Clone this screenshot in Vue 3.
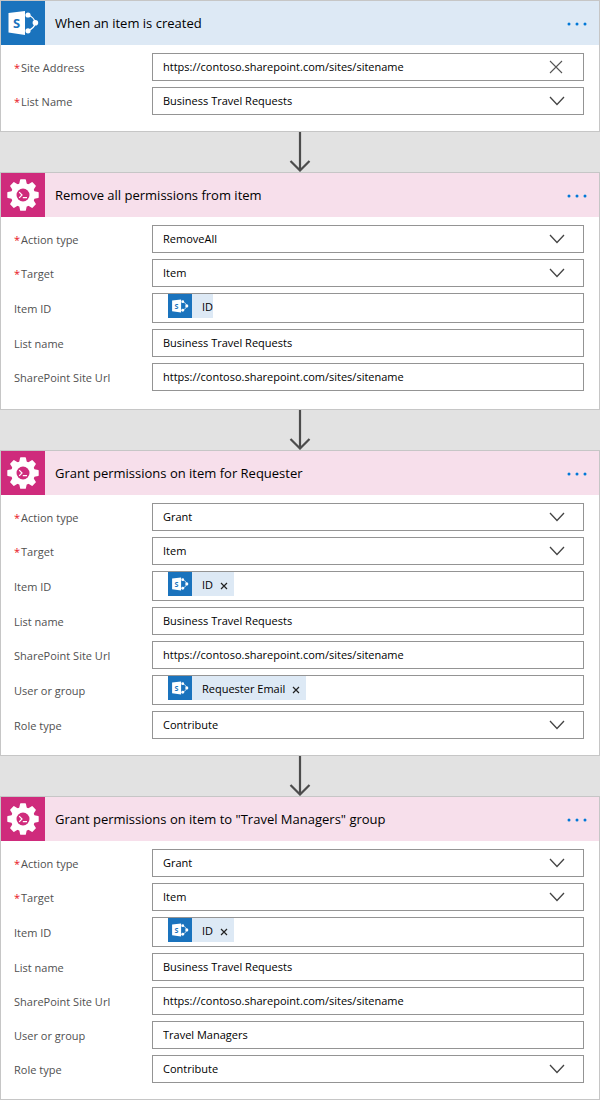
<script setup>
import { h } from 'vue'

const SharePointIcon = () =>
  h('svg', { viewBox: '0 0 44 44', 'aria-hidden': 'true' }, [
    h('path', {
      d: 'M27 14Q33 16 34.500 22Q33 27.500 27 29.800',
      fill: 'none',
      stroke: '#fff',
      'stroke-width': 1.2,
    }),
    h('circle', { cx: 27, cy: 14, r: 2.6, fill: '#fff' }),
    h('circle', { cx: 34.4, cy: 21.8, r: 2.8, fill: '#fff' }),
    h('circle', { cx: 27, cy: 29.8, r: 2.6, fill: '#fff' }),
    h('path', { d: 'M7.500 12 24 10v24L7.500 31.500z', fill: '#fff' }),
    h(
      'text',
      {
        x: 15.5,
        y: 27,
        'text-anchor': 'middle',
        'font-family': 'Open Sans, sans-serif',
        'font-size': 13,
        'font-weight': 700,
        fill: '#1a73bd',
      },
      'S',
    ),
  ])

const site = 'https://contoso.sharepoint.com/sites/sitename'
const list = 'Business Travel Requests'

const text = (label, value) => ({ label, value, kind: 'text' })
const select = (label, value, required = false) => ({ label, value, required, kind: 'select' })
const token = (label, value, removable = true) => ({ label, value, removable, kind: 'token' })

const cards = [
  {
    title: 'When an item is created',
    theme: 'trigger',
    fields: [
      { label: 'Site Address', value: site, required: true, kind: 'clearable' },
      select('List Name', list, true),
    ],
  },
  {
    title: 'Remove all permissions from item',
    theme: 'action',
    roomy: true,
    fields: [
      select('Action type', 'RemoveAll', true),
      select('Target', 'Item', true),
      token('Item ID', 'ID', false),
      text('List name', list),
      text('SharePoint Site Url', site),
    ],
  },
  {
    title: 'Grant permissions on item for Requester',
    theme: 'action',
    fields: [
      select('Action type', 'Grant', true),
      select('Target', 'Item', true),
      token('Item ID', 'ID'),
      text('List name', list),
      text('SharePoint Site Url', site),
      token('User or group', 'Requester Email'),
      select('Role type', 'Contribute'),
    ],
  },
  {
    title: 'Grant permissions on item to "Travel Managers" group',
    theme: 'action',
    fields: [
      select('Action type', 'Grant', true),
      select('Target', 'Item', true),
      token('Item ID', 'ID'),
      text('List name', list),
      text('SharePoint Site Url', site),
      text('User or group', 'Travel Managers'),
      select('Role type', 'Contribute'),
    ],
  },
]
</script>

<template>
  <main class="flow">
    <template v-for="(card, c) in cards" :key="c">
      <svg v-if="c" class="arrow" viewBox="0 0 30 40" aria-hidden="true">
        <path d="M15 0V38M5.500 29 15 38.500 24.500 29" fill="none" stroke="#4c4c4c" stroke-width="2.200" />
      </svg>
      <section class="card" :class="[card.theme, { roomy: card.roomy }]">
        <header class="head">
          <span class="tile">
            <SharePointIcon v-if="card.theme === 'trigger'" />
            <svg v-else viewBox="-22 -22 44 44" aria-hidden="true">
              <g fill="#fff">
                <circle r="12" />
                <path
                  v-for="n in 8"
                  :key="n"
                  d="M-4-10-2.900-15.200Q-2.800-15.700-2.200-15.700H2.200Q2.800-15.700 2.900-15.200L4-10z"
                  :transform="`rotate(${n * 45})`"
                />
              </g>
              <circle r="6.500" fill="#cf2b7c" />
              <path d="M-3.800-2.800-1 0-3.800 2.800M-.2 2.600H4" fill="none" stroke="#fff" stroke-width="1.200" />
            </svg>
          </span>
          <h2>{{ card.title }}</h2>
          <button class="more" type="button">
            <svg viewBox="0 0 20 4" aria-hidden="true">
              <g fill="#0078d7"><circle cx="2" cy="2" r="1.500" /><circle cx="10" cy="2" r="1.500" /><circle cx="18" cy="2" r="1.500" /></g>
            </svg>
          </button>
        </header>
        <div class="fields">
          <div v-for="(f, i) in card.fields" :key="i" class="row">
            <label :id="`l${c}-${i}`" :for="f.kind === 'token' ? null : `f${c}-${i}`"><span v-if="f.required" class="star">*</span>{{ f.label }}</label>

            <div v-if="f.kind === 'token'" class="box tokens" role="group" :aria-labelledby="`l${c}-${i}`">
              <span class="token">
                <span class="token-tile"><SharePointIcon /></span>
                <span class="token-text">{{ f.value }}</span>
                <button v-if="f.removable" class="remove" type="button">
                  <svg viewBox="0 0 8 8" aria-hidden="true"><path d="M1 1 7 7M7 1 1 7" fill="none" stroke="#222" stroke-width="1.200" /></svg>
                </button>
              </span>
            </div>

            <div v-else-if="f.kind === 'select'" class="box">
              <select :id="`f${c}-${i}`"><option>{{ f.value }}</option></select>
              <svg class="chevron" viewBox="0 0 16 10" aria-hidden="true">
                <path d="M1 1 8 8.500 15 1" fill="none" stroke="#444" stroke-width="1.300" />
              </svg>
            </div>

            <div v-else class="box">
              <input :id="`f${c}-${i}`" type="text" :value="f.value" />
              <button v-if="f.kind === 'clearable'" class="clear" type="button">
                <svg viewBox="0 0 14 14" aria-hidden="true"><path d="M1 1 13 13M13 1 1 13" fill="none" stroke="#555" stroke-width="1.100" /></svg>
              </button>
            </div>
          </div>
        </div>
      </section>
    </template>
  </main>
</template>

<style>
body {
  margin: 0;
  background: #e2e2e2;
}
</style>

<style scoped>
.flow {
  display: flex;
  flex-direction: column;
  font-family: 'Open Sans', 'Noto Sans', sans-serif;
  font-size: 11px;
  line-height: 16px;
  color: #000;
}
.arrow {
  align-self: center;
  width: 30px;
  height: 40px;
}
.card {
  border: 1px solid #c6c6c6;
  background: #fff;
}
.head {
  display: flex;
  align-items: center;
  height: 44px;
}
.trigger .head {
  background: #dde9f5;
}
.action .head {
  background: #f7dfeb;
}
.tile {
  width: 44px;
  height: 44px;
  background: #cf2b7c;
}
.trigger .tile {
  background: #1a73bd;
}
.tile svg {
  display: block;
  width: 44px;
  height: 44px;
}
h2 {
  flex: 1;
  margin: 0;
  padding-left: 10px;
  font-size: 13px;
  font-weight: 400;
  line-height: 20px;
}
button {
  display: flex;
  align-items: center;
  justify-content: center;
  padding: 0;
  border: 0;
  background: none;
  cursor: pointer;
}
.more {
  width: 44px;
  height: 44px;
  padding-top: 2px;
}
.more svg {
  width: 20px;
  height: 4px;
}
.fields {
  display: flex;
  flex-direction: column;
  gap: 6px;
  padding: 8px 15px 16px 13px;
}
.roomy .fields {
  padding-bottom: 18px;
}
.row {
  display: flex;
  align-items: center;
}
label {
  width: 138px;
  padding-top: 2px;
  color: #505050;
}
.star {
  margin-right: 1px;
  color: #e81123;
}
.box {
  box-sizing: border-box;
  display: flex;
  align-items: center;
  flex: 1;
  height: 28px;
  border: 1px solid #949494;
  background: #fff;
  position: relative;
}
.tokens {
  height: 30px;
  align-items: flex-start;
  padding-left: 15px;
}
input,
select {
  box-sizing: border-box;
  appearance: none;
  flex: 1;
  min-width: 0;
  height: 100%;
  margin: 0;
  padding: 0 10px;
  border: 0;
  border-radius: 0;
  background: transparent;
  font: inherit;
  color: inherit;
}
input {
  padding-bottom: 2px;
}
.chevron {
  position: absolute;
  right: 18px;
  width: 16px;
  height: 10px;
  pointer-events: none;
}
.clear {
  width: 14px;
  height: 14px;
  margin-right: 20px;
}
.clear svg {
  width: 14px;
  height: 14px;
}
.token {
  display: flex;
  align-items: center;
  height: 24px;
  background: #dde9f5;
}
.token-tile {
  width: 24px;
  height: 24px;
  background: #1a73bd;
}
.token-tile svg {
  display: block;
  width: 24px;
  height: 24px;
}
.token-text {
  padding: 2px 0 0 10px;
}
.remove {
  width: 21px;
  height: 24px;
  padding-top: 4px;
}
.remove svg {
  width: 8px;
  height: 8px;
}
</style>
